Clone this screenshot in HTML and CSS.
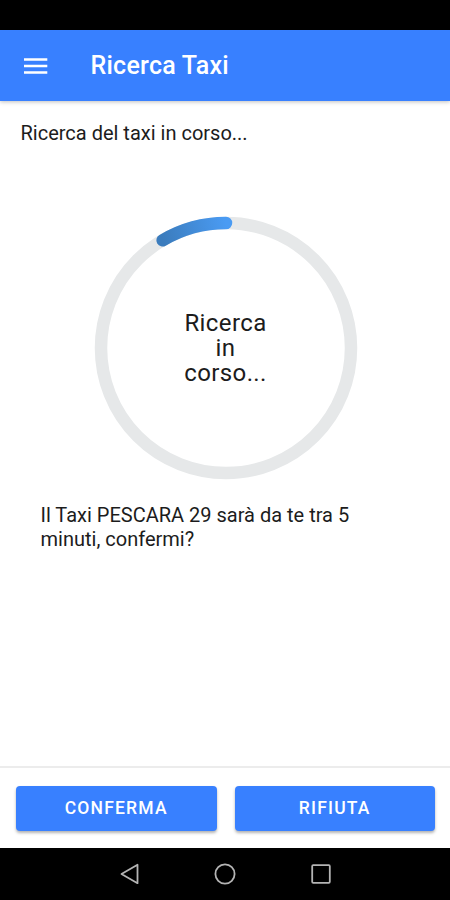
FILE: index.html
```html
<!DOCTYPE html>
<html lang="it">
<head>
    <meta charset="UTF-8">
    <meta name="viewport" content="width=device-width, initial-scale=1.0">
    <title>Ricerca Taxi</title>
    <link rel="stylesheet" href="styles.css">
</head>
<body>
    <div class="status-bar"></div>
    <header class="toolbar">
        <button class="menu-btn" aria-label="Menu">
            <svg viewBox="0 0 24 16" width="24" height="16">
                <path d="M0 1.6h23.3M0 8h23.3M0 14.4h23.3" stroke="currentColor" stroke-width="2.5"></path>
            </svg>
        </button>
        <h1>Ricerca Taxi</h1>
    </header>

    <main class="content">
        <p class="subtitle">Ricerca del taxi in corso...</p>
        <div class="progress">
            <svg viewBox="0 0 264 264" width="264" height="264">
                <defs>
                    <linearGradient id="arc" gradientUnits="userSpaceOnUse" x1="69" y1="24" x2="132" y2="7">
                        <stop offset="0" stop-color="#3b7cbd"></stop>
                        <stop offset="1" stop-color="#4a9bf3"></stop>
                    </linearGradient>
                </defs>
                <circle cx="132" cy="132" r="125" fill="none" stroke="#e6e8e9" stroke-width="12.5"></circle>
                <path d="M68.6 24.3A125 125 0 0 1 132 7" fill="none" stroke="url(#arc)" stroke-width="12.5" stroke-linecap="round"></path>
            </svg>
            <div class="progress-label">
                <p>Ricerca</p>
                <p>in</p>
                <p>corso...</p>
            </div>
        </div>
        <p class="message">Il Taxi PESCARA 29 sarà da te tra 5 minuti, confermi?</p>
    </main>

    <footer class="actions">
        <button class="btn">CONFERMA</button>
        <button class="btn">RIFIUTA</button>
    </footer>

    <nav class="nav-bar">
        <svg viewBox="0 0 22 22" width="22" height="22">
            <path d="M2.5 11L18.5 1.8V20.2Z"></path>
        </svg>
        <svg viewBox="0 0 22 22" width="22" height="22">
            <circle cx="11" cy="11" r="9.6"></circle>
        </svg>
        <svg viewBox="0 0 22 22" width="22" height="22">
            <rect x="2.2" y="2.2" width="17.6" height="17.6" rx="1"></rect>
        </svg>
    </nav>
</body>
</html>
```

FILE: styles.css
```css
* {
    margin: 0;
    padding: 0;
    box-sizing: border-box;
}

body {
    display: flex;
    flex-direction: column;
    height: 900px;
    background-color: #ffffff;
    color: #1c1c1c;
    font-family: Roboto, sans-serif;
    overflow: hidden;
}

button {
    border: none;
    color: #ffffff;
    font-family: inherit;
}

.status-bar {
    height: 30px;
    background-color: #000000;
}

.toolbar {
    position: relative;
    display: flex;
    align-items: center;
    height: 70.5px;
    padding: 1.5px 0 0 23.5px;
    background-color: #3880ff;
    color: #ffffff;
    box-shadow: 0 1px 4px rgba(0, 0, 0, 0.25);
}

.menu-btn {
    display: flex;
    width: 24px;
    margin-right: 43px;
    background: none;
}

h1 {
    font-size: 25px;
    font-weight: 500;
    letter-spacing: 0.25px;
    line-height: 30px;
}

.content {
    flex: 1;
}

.subtitle {
    padding: 20px 20px 0 20.5px;
    font-size: 20px;
    line-height: 24px;
}

.progress {
    display: grid;
    place-items: center;
    width: 264px;
    height: 264px;
    margin: 71px 0 0 93.5px;
}

.progress svg,
.progress-label {
    grid-area: 1 / 1;
}

.progress-label {
    padding-top: 1px;
    font-size: 24px;
    letter-spacing: 0.4px;
    line-height: 25px;
    text-align: center;
}

.progress-label p {
    height: 25px;
}

.message {
    padding: 23.5px 60px 0 40.5px;
    font-size: 20px;
    line-height: 24px;
}

.actions {
    display: flex;
    gap: 18px;
    height: 82px;
    padding: 18px 15px 18px 16px;
    border-top: 2px solid #ececec;
}

.btn {
    flex: 1;
    height: 45px;
    padding-bottom: 2px;
    border-radius: 4px;
    background-color: #3880ff;
    box-shadow: 0 2px 3px rgba(0, 0, 0, 0.3);
    font-size: 17.5px;
    font-weight: 500;
    letter-spacing: 1.2px;
}

.nav-bar {
    display: flex;
    justify-content: center;
    gap: 73.5px;
    height: 52px;
    padding-top: 15px;
    background-color: #000000;
}

.nav-bar svg {
    fill: none;
    stroke: #b4b4b4;
    stroke-width: 1.8;
    stroke-linejoin: round;
}
```
